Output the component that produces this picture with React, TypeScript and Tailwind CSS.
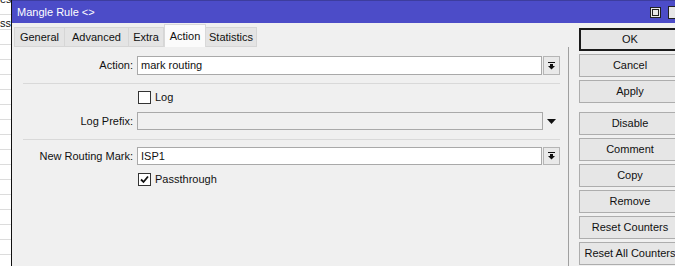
import React from "react";

const font = { fontFamily: '"Liberation Sans", Arial, sans-serif' };

function DropIcon() {
  return (
    <svg width="7" height="8" viewBox="0 0 7 8" className="block">
      <rect x="0" y="0" width="7" height="1" fill="#111" />
      <rect x="2" y="2" width="3" height="2" fill="#111" />
      <polygon points="0,4 7,4 3.5,7.5" fill="#111" />
    </svg>
  );
}

function Tab({ label, w, active }: { label: string; w: string; active?: boolean }) {
  if (active) {
    return (
      <div
        className={`${w} h-[23px] -mt-[2px] flex items-start justify-center pt-[3px] bg-[#fbfbfb] border-x border-t border-[#d9d9d9] relative z-10`}
      >
        {label}
      </div>
    );
  }
  return (
    <div className={`${w} h-[20px] flex items-center justify-center bg-[#e4e4e4] border border-[#d6d6d6] -ml-px first:ml-0`}>
      {label}
    </div>
  );
}

function Btn({ label, def }: { label: string; def?: boolean }) {
  return (
    <div
      className={`w-[102px] h-[23px] shrink-0 flex items-center justify-center ${
        def ? "border-2 border-[#1a1a1a] bg-[#e6e6e6]" : "border border-[#adadad] bg-[#e6e6e6]"
      }`}
    >
      {label}
    </div>
  );
}

function Checkbox({ checked }: { checked?: boolean }) {
  return (
    <div className="w-[13px] h-[13px] border border-[#333] bg-white flex items-center justify-center">
      {checked && (
        <svg width="9" height="9" viewBox="0 0 9 9">
          <polyline points="1,4.5 3.5,7 8,1.5" fill="none" stroke="#111" strokeWidth="1.8" />
        </svg>
      )}
    </div>
  );
}

export default function App() {
  const rows = Array.from({ length: 18 });
  return (
    <div className="w-[675px] h-[266px] overflow-hidden flex bg-white text-[11px] text-[#111]" style={font}>
      {/* background window strip */}
      <div className="w-[11px] shrink-0 bg-white flex flex-col overflow-hidden">
        <div className="h-[15px] shrink-0 border-b border-[#dcdcdc] overflow-hidden">
          <div className="leading-[11px] -mt-[6px]">es</div>
        </div>
        <div className="h-[15px] shrink-0 border-b border-[#dcdcdc] pt-[3px] leading-[11px] overflow-hidden">ss</div>
        {rows.map((_, i) => (
          <div key={i} className="h-[15px] shrink-0 border-b border-[#dcdcdc]" />
        ))}
      </div>
      <div className="w-px shrink-0 bg-[#111]" />
      {/* window */}
      <div className="flex-1 flex flex-col bg-[#f0f0f0] min-w-0">
        <div className="h-[23px] shrink-0 bg-[#4c4cc8] border-t border-[#3d3d9e] flex items-center pl-[5px] text-white text-[11px]">
          <span className="flex-1">Mangle Rule &lt;&gt;</span>
          <div className="w-[11px] h-[11px] bg-[#e8e8e8] border border-[#222] flex items-center justify-center mr-[7px]">
            <div className="w-[7px] h-[7px] border border-[#222]" />
          </div>
          <div className="w-[8px] h-[13px] bg-[#e8e8e8] border-l border-y border-[#222] -mr-px" />
        </div>
        <div className="flex-1 flex min-h-0">
          {/* left panel */}
          <div className="w-[556px] shrink-0 flex flex-col">
            <div className="flex items-end pl-[2px] mt-[2px] h-[22px]">
              <Tab label="General" w="w-[51px]" />
              <Tab label="Advanced" w="w-[65px]" />
              <Tab label="Extra" w="w-[36px]" />
              <Tab label="Action" w="w-[42px]" active />
              <Tab label="Statistics" w="w-[52px]" />
            </div>
            <div className="flex flex-col pt-[9px]">
              {/* Action */}
              <div className="flex items-center h-[19px]">
                <div className="w-[125px] text-right pr-[4px]">Action:</div>
                <div className="w-[405px] h-[19px] bg-white border border-[#a9a9a9] flex items-center pl-[3px]">mark routing</div>
                <div className="w-[17px] h-[19px] ml-[1px] border border-[#b5b5b5] bg-[#e9e9e9] flex items-center justify-center">
                  <DropIcon />
                </div>
              </div>
              <div className="h-px bg-[#d9d9d9] ml-[11px] mr-[8px] mt-[8px]" />
              {/* Log */}
              <div className="flex items-center h-[13px] mt-[7px] pl-[126px]">
                <Checkbox />
                <span className="ml-[4px]">Log</span>
              </div>
              {/* Log Prefix */}
              <div className="flex items-center h-[18px] mt-[8px]">
                <div className="w-[125px] text-right pr-[4px]">Log Prefix:</div>
                <div className="w-[406px] h-[18px] bg-[#f0f0f0] border border-[#a9a9a9]" />
                <svg width="9" height="5" viewBox="0 0 9 5" className="ml-[4px] block">
                  <polygon points="0,0 9,0 4.5,5" fill="#111" />
                </svg>
              </div>
              <div className="h-px bg-[#d9d9d9] ml-[11px] mr-[8px] mt-[9px]" />
              {/* New Routing Mark */}
              <div className="flex items-center h-[18px] mt-[7px]">
                <div className="w-[125px] text-right pr-[4px]">New Routing Mark:</div>
                <div className="w-[405px] h-[18px] bg-white border border-[#a9a9a9] flex items-center pl-[3px]">ISP1</div>
                <div className="w-[17px] h-[18px] ml-[1px] border border-[#b5b5b5] bg-[#e9e9e9] flex items-center justify-center">
                  <DropIcon />
                </div>
              </div>
              {/* Passthrough */}
              <div className="flex items-center h-[13px] mt-[8px] pl-[126px]">
                <Checkbox checked />
                <span className="ml-[4px]">Passthrough</span>
              </div>
            </div>
          </div>
          {/* vertical separator */}
          <div className="w-px shrink-0 bg-[#a0a0a0] mt-[24px]" />
          {/* buttons */}
          <div className="flex flex-col pl-[10px] pt-[5px] gap-[3px]">
            <Btn label="OK" def />
            <Btn label="Cancel" />
            <Btn label="Apply" />
            <div className="h-[3px] shrink-0" />
            <Btn label="Disable" />
            <Btn label="Comment" />
            <Btn label="Copy" />
            <Btn label="Remove" />
            <Btn label="Reset Counters" />
            <Btn label="Reset All Counters" />
          </div>
        </div>
      </div>
    </div>
  );
}
